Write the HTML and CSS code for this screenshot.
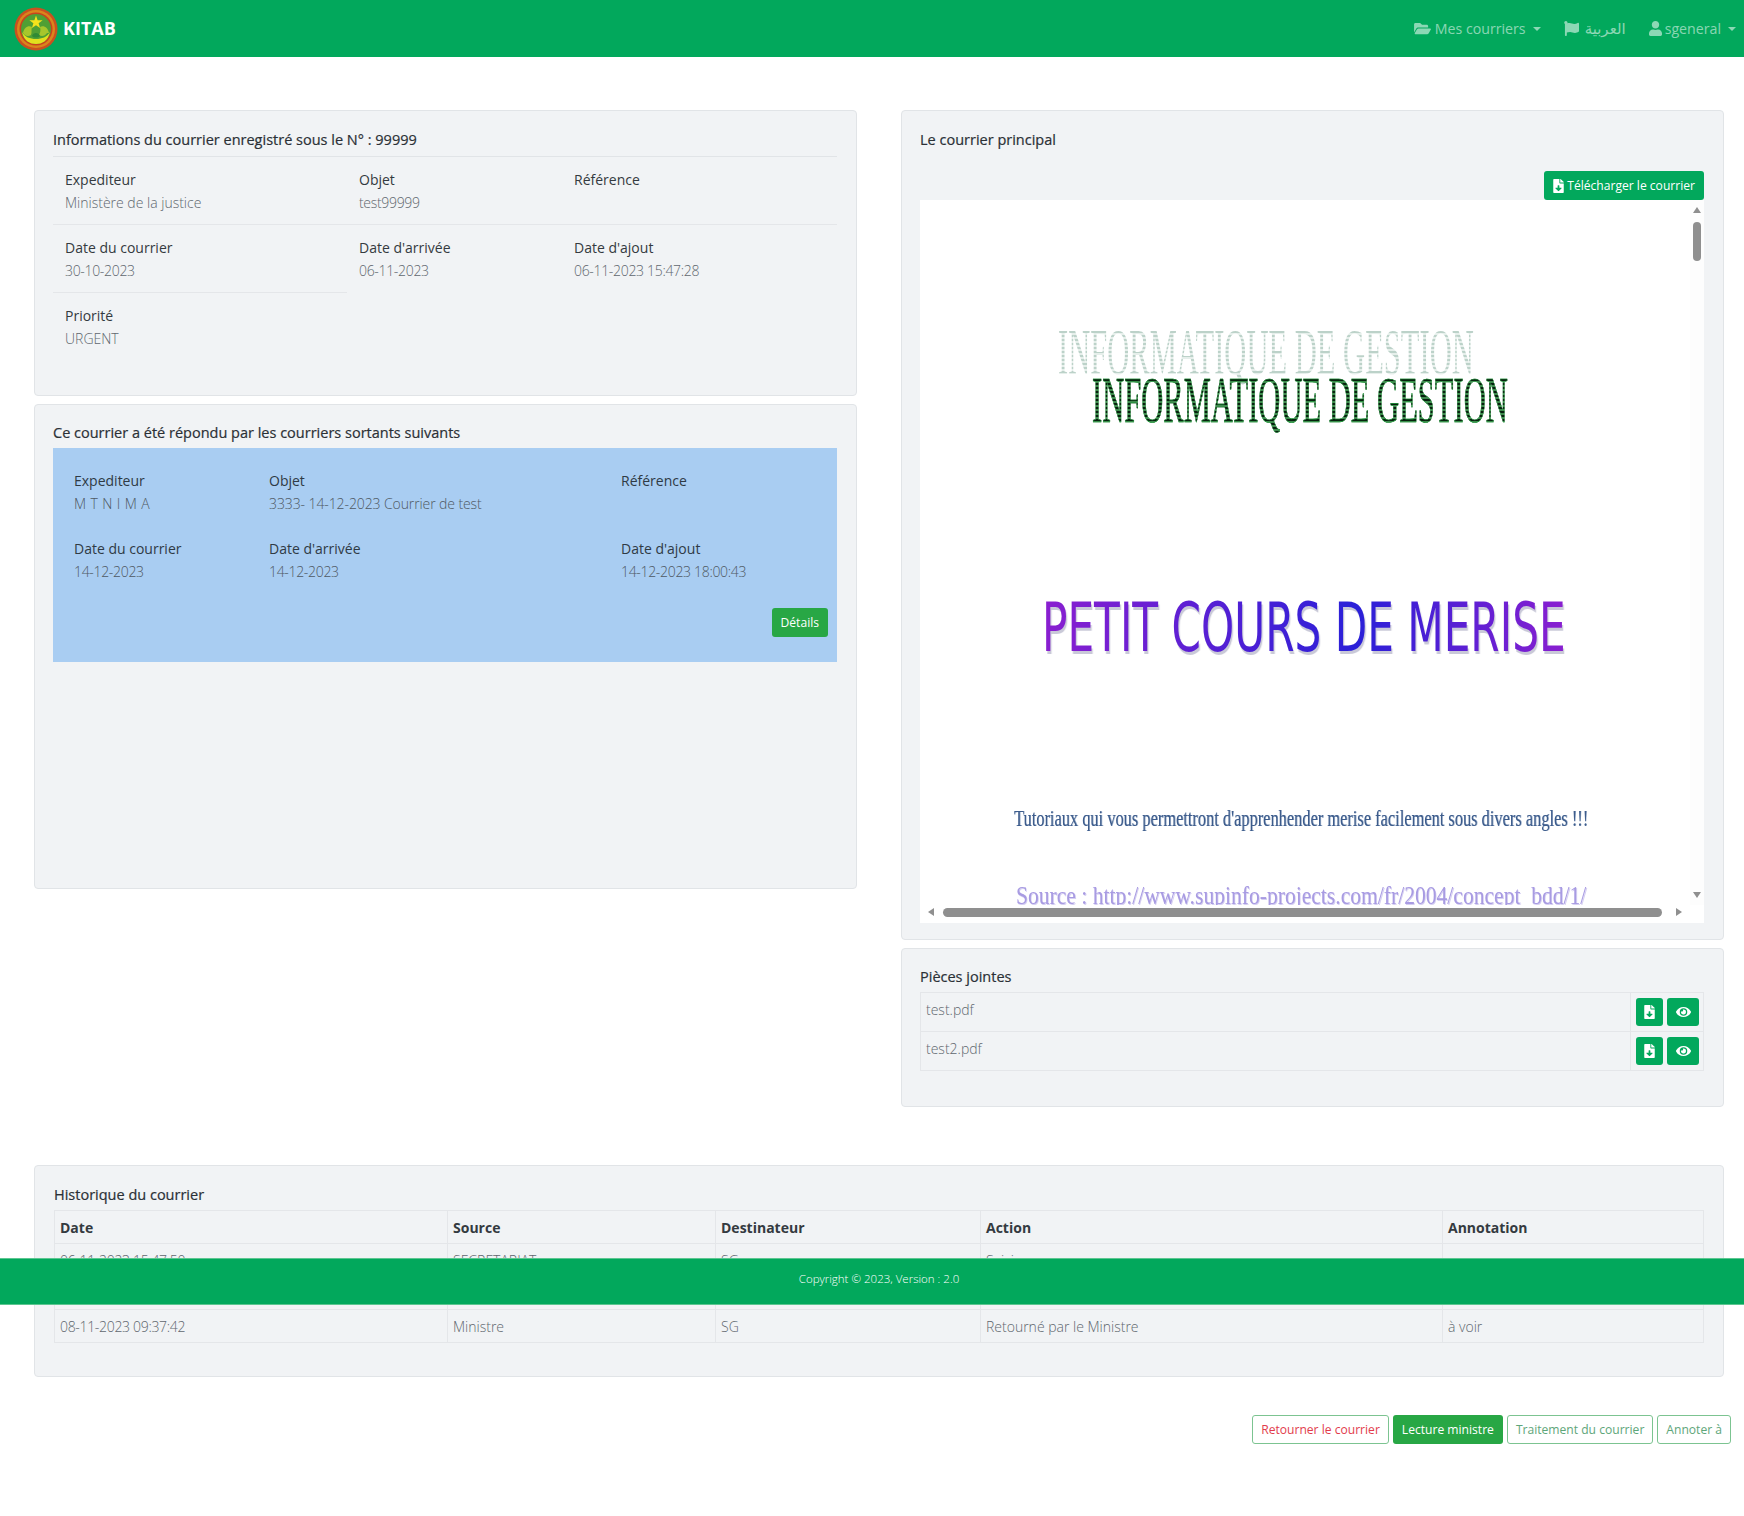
FILE: index.html
```html
<!DOCTYPE html>
<html lang="fr">
<head>
	<meta charset="UTF-8">
	<title>KITAB</title>
	<link rel="stylesheet" href="styles.css">
</head>
<body>
<svg class="defs" width="0" height="0">
	<symbol id="i-folder" viewBox="0 0 576 512"><path d="M572.694 292.093L500.27 416.248A63.997 63.997 0 0 1 444.989 448H45.025c-18.523 0-30.064-20.093-20.731-36.093l72.424-124.155A64 64 0 0 1 152 256h399.964c18.523 0 30.064 20.093 20.73 36.093zM152 224h328v-48c0-26.51-21.49-48-48-48H272l-64-64H48C21.49 64 0 85.49 0 112v278.046l69.077-118.418C86.214 242.25 117.989 224 152 224z"/></symbol>
	<symbol id="i-flag" viewBox="0 0 512 512"><path d="M349.565 98.783C295.978 98.783 251.721 64 184.348 64c-24.955 0-47.309 4.384-68.045 12.013a55.947 55.947 0 0 0 3.586-23.562C118.117 24.015 94.806 1.206 66.338.048 34.345-1.254 8 24.296 8 56c0 19.026 9.497 35.825 24 45.945V488c0 13.255 10.745 24 24 24h16c13.255 0 24-10.745 24-24v-94.4c28.311-12.064 63.582-22.122 114.435-22.122 53.588 0 97.844 34.783 165.217 34.783 48.169 0 86.667-16.294 122.505-40.858C506.84 359.452 512 349.571 512 339.045v-243.1c0-23.393-24.269-38.87-45.485-29.016-34.338 15.948-76.454 31.854-116.95 31.854z"/></symbol>
	<symbol id="i-user" viewBox="0 0 448 512"><path d="M224 256c70.7 0 128-57.3 128-128S294.7 0 224 0 96 57.3 96 128s57.3 128 128 128zm89.6 32h-16.7c-22.2 10.2-46.9 16-72.9 16s-50.6-5.8-72.9-16h-16.7C60.2 288 0 348.2 0 422.4V464c0 26.5 21.5 48 48 48h352c26.5 0 48-21.5 48-48v-41.6c0-74.2-60.2-134.4-134.4-134.4z"/></symbol>
	<symbol id="i-file" viewBox="0 0 384 512"><path d="M224 136V0H24C10.7 0 0 10.7 0 24v464c0 13.3 10.7 24 24 24h336c13.3 0 24-10.7 24-24V160H248c-13.2 0-24-10.8-24-24zm76.45 211.36l-96.42 95.7c-6.65 6.61-17.39 6.61-24.04 0l-96.42-95.7C73.42 337.29 80.54 320 94.82 320H160v-80c0-8.84 7.16-16 16-16h32c8.84 0 16 7.16 16 16v80h65.18c14.28 0 21.4 17.29 11.27 27.36zM377 105L279.1 7c-4.5-4.5-10.6-7-17-7H256v128h128v-6.1c0-6.3-2.5-12.4-7-16.9z"/></symbol>
	<symbol id="i-eye" viewBox="0 0 576 512"><path d="M572.52 241.4C518.29 135.59 410.93 64 288 64S57.68 135.64 3.48 241.41a32.35 32.35 0 0 0 0 29.19C57.71 376.41 165.07 448 288 448s230.32-71.64 284.52-177.41a32.35 32.35 0 0 0 0-29.19zM288 400a144 144 0 1 1 144-144 143.93 143.93 0 0 1-144 144zm0-240a95.31 95.31 0 0 0-25.31 3.79 47.85 47.85 0 0 1-66.9 66.9A95.78 95.78 0 1 0 288 160z"/></symbol>
</svg>

<nav class="navbar">
	<a class="brand" href="#">
		<svg class="logo" viewBox="0 0 44 44">
			<circle cx="22" cy="22" r="21.5" fill="#c9501f"/>
			<circle cx="22" cy="22" r="19" fill="#d9861c"/>
			<circle cx="22" cy="22" r="16.5" fill="#c8421f"/>
			<circle cx="22" cy="22" r="15" fill="#4f9f34"/>
			<path d="M8 25c2 9 8 12 14 12s12-3 14-12c-3 5-8 7-14 7S11 30 8 25z" fill="#e3df1e"/>
			<path d="M22 8.500l1.600 4.700 5 .1-4 3 1.500 4.800-4.100-2.900-4.100 2.900 1.500-4.800-4-3 5-.1z" fill="#f5e31c"/>
			<path d="M9 26c1-5 5-8 9-6-1 3 0 6-1 8-3 2-6 1-8-2zM35 26c-1-5-5-8-9-6 1 3 0 6-1 8 3 2 6 1 8-2z" fill="#a8c62c"/>
			<path d="M18 29c1-4 7-4 8 0-2 2-6 2-8 0z" fill="#2f8a35"/>
		</svg>
		KITAB
	</a>
	<div class="nav-links">
		<a class="nav-item" href="#"><svg class="nav-icon"><use href="#i-folder"/></svg>Mes courriers<span class="caret"></span></a>
		<a class="nav-item lang" href="#"><svg class="nav-icon flag"><use href="#i-flag"/></svg>العربية</a>
		<a class="nav-item account" href="#"><svg class="nav-icon user"><use href="#i-user"/></svg>sgeneral<span class="caret"></span></a>
	</div>
</nav>

<main class="page">
	<div class="columns">
		<div class="col">
			<section class="card card-info">
				<h5 class="card-title ruled">Informations du courrier enregistré sous le N° : 99999</h5>
				<div class="info-grid">
					<div class="cell line"><div>Expediteur</div><div class="val">Ministère de la justice</div></div>
					<div class="cell line"><div>Objet</div><div class="val num">test99999</div></div>
					<div class="cell line"><div>Référence</div></div>
					<div class="cell line"><div>Date du courrier</div><div class="val num">30-10-2023</div></div>
					<div class="cell"><div>Date d'arrivée</div><div class="val num">06-11-2023</div></div>
					<div class="cell"><div>Date d'ajout</div><div class="val num">06-11-2023 15:47:28</div></div>
					<div class="cell"><div>Priorité</div><div class="val">URGENT</div></div>
				</div>
			</section>
			<section class="card card-reply">
				<h5 class="card-title">Ce courrier a été répondu par les courriers sortants suivants</h5>
				<div class="reply-box">
					<div class="reply-grid">
						<div class="cell"><div>Expediteur</div><div class="val spaced">M T N I M A</div></div>
						<div class="cell"><div>Objet</div><div class="val tight">3333- 14-12-2023 Courrier de test</div></div>
						<div class="cell"><div>Référence</div></div>
						<div class="cell"><div>Date du courrier</div><div class="val num">14-12-2023</div></div>
						<div class="cell"><div>Date d'arrivée</div><div class="val num">14-12-2023</div></div>
						<div class="cell"><div>Date d'ajout</div><div class="val num">14-12-2023 18:00:43</div></div>
					</div>
					<div class="reply-actions"><a class="btn btn-success" href="#">Détails</a></div>
				</div>
			</section>
		</div>
		<div class="col">
			<section class="card card-main">
				<h5 class="card-title">Le courrier principal</h5>
				<div class="download-row">
					<a class="btn btn-green btn-dl" href="#"><svg class="btn-icon"><use href="#i-file"/></svg>Télécharger le courrier</a>
				</div>
				<div class="viewer">
					<div class="pdf-page">
						<div class="pdf-line wa-ghost">INFORMATIQUE DE GESTION</div>
						<div class="pdf-line wa-dark">INFORMATIQUE DE GESTION</div>
						<div class="pdf-line wa-title">PETIT COURS DE MERISE</div>
						<div class="pdf-line wa-tuto">Tutoriaux qui vous permettront d'apprenhender merise facilement sous divers angles  !!!</div>
						<div class="pdf-line wa-source">Source : http://www.supinfo-projects.com/fr/2004/concept_bdd/1/</div>
					</div>
					<div class="vbar">
						<span class="arrow up"></span>
						<span class="vthumb"></span>
						<span class="arrow down"></span>
					</div>
					<div class="hbar">
						<span class="arrow left"></span>
						<span class="hthumb"></span>
						<span class="arrow right"></span>
					</div>
				</div>
			</section>
			<section class="card card-files">
				<h5 class="card-title">Pièces jointes</h5>
				<table class="table files">
					<tr>
						<td class="val">test.pdf</td>
						<td class="file-cell">
							<div class="file-btns">
								<a class="btn btn-green btn-sq" href="#"><svg class="btn-icon"><use href="#i-file"/></svg></a>
								<a class="btn btn-green btn-eye" href="#"><svg class="btn-icon eye"><use href="#i-eye"/></svg></a>
							</div>
						</td>
					</tr>
					<tr>
						<td class="val">test2.pdf</td>
						<td class="file-cell">
							<div class="file-btns">
								<a class="btn btn-green btn-sq" href="#"><svg class="btn-icon"><use href="#i-file"/></svg></a>
								<a class="btn btn-green btn-eye" href="#"><svg class="btn-icon eye"><use href="#i-eye"/></svg></a>
							</div>
						</td>
					</tr>
				</table>
			</section>
		</div>
	</div>

	<section class="card card-history">
		<h5 class="card-title">Historique du courrier</h5>
		<table class="table history">
			<colgroup>
				<col class="c-date"><col class="c-src"><col class="c-dest"><col class="c-act"><col>
			</colgroup>
			<tr><th>Date</th><th>Source</th><th>Destinateur</th><th>Action</th><th>Annotation</th></tr>
			<tr><td class="num">06-11-2023 15:47:50</td><td>SECRETARIAT</td><td>SG</td><td>Saisie</td><td></td></tr>
			<tr><td></td><td></td><td></td><td></td><td></td></tr>
			<tr><td class="num">08-11-2023 09:37:42</td><td>Ministre</td><td>SG</td><td>Retourné par le Ministre</td><td>à voir</td></tr>
		</table>
	</section>

	<div class="actions">
		<a class="btn btn-outline danger" href="#">Retourner le courrier</a>
		<a class="btn btn-success" href="#">Lecture ministre</a>
		<a class="btn btn-outline" href="#">Traitement du courrier</a>
		<a class="btn btn-outline" href="#">Annoter à</a>
	</div>
</main>

<footer class="footer">Copyright © 2023, Version : 2.0</footer>
</body>
</html>
```
FILE: styles.css
```css
*{box-sizing:border-box;margin:0;padding:0;}
body{position:relative;height:1516px;overflow:hidden;background:#fff;color:#343a40;font-family:"Open Sans","DejaVu Sans",sans-serif;font-size:14px;line-height:23px;}
a{text-decoration:none;}
.defs{position:absolute;}

/* navbar */
.navbar{height:57px;background:#02a85c;display:flex;align-items:center;justify-content:space-between;padding:0 8px 0 14px;}
.brand{display:flex;align-items:center;gap:5px;color:#fff;font-size:18px;font-weight:700;}
.logo{width:44px;height:44px;}
.nav-links{display:flex;align-items:center;}
.nav-item{display:flex;align-items:center;color:rgba(255,255,255,.55);font-size:14.2px;font-weight:400;margin-left:22px;}
.nav-item.lang{font-size:15px;}
.nav-item.account{margin-left:23px;}
.nav-icon{width:17px;height:15px;fill:currentColor;margin-right:4px;}
.nav-icon.flag{margin-right:5px;}
.nav-icon.user{width:13px;margin-right:3px;}
.caret{width:0;height:0;border-top:4px solid currentColor;border-left:4px solid transparent;border-right:4px solid transparent;margin-left:7px;}

/* layout */
.page{padding:53px 19px 0 34px;}
.columns{display:grid;grid-template-columns:823px 823px;column-gap:44px;}
.col{display:flex;flex-direction:column;gap:8px;}
.card{background:#f1f3f5;border:1px solid #e1e4e7;border-radius:4px;padding:18px 19px 18px 18px;}
.card-title{font-size:14.5px;font-weight:500;line-height:21px;color:#2b3036;-webkit-text-stroke:.2px #2b3036;}
.card-title.ruled{border-bottom:1px solid #e1e4e7;padding-bottom:6px;}

.card-info{height:286px;}
.info-grid{display:grid;grid-template-columns:294px 215px 1fr;}
.cell{padding:11px 12px 8px;height:68px;}
.cell.line{border-bottom:1px solid #e4e6e9;}
.val{color:#60676e;font-weight:300;}
.val.spaced{letter-spacing:.4px;}
.val.tight{letter-spacing:-.1px;}
.num{letter-spacing:-.32px;}

.card-reply{height:485px;padding-top:17px;}
.reply-box{background:#a9cdf2;height:214px;margin-top:5px;padding:21px 9px 0 21px;color:#2f3a45;}
.reply-grid{display:grid;grid-template-columns:195px 352px 1fr;}
.reply-grid .cell{padding:0;height:68px;}
.reply-grid .val{color:#4f5963;}
.reply-actions{display:flex;justify-content:flex-end;margin-top:3px;}

/* buttons */
.btn{display:inline-flex;align-items:center;justify-content:center;height:29px;padding:0 8px;border-radius:3px;border:1px solid transparent;font-size:12.1px;white-space:nowrap;}
.btn-green{background:#02a85c;color:#fff;}
.btn-success{background:#28a745;color:#fff;}
.btn-outline{background:#fff;border-color:#7cc491;color:#5ea67a;}
.btn-outline.danger{color:#e23c4c;}
.btn-icon{width:11px;height:14px;fill:#fff;margin-right:3px;}
.btn-sq .btn-icon,.btn-eye .btn-icon{margin:0;}
.btn-icon.eye{width:15px;}

.card-main{height:830px;}
.download-row{display:flex;justify-content:flex-end;margin-top:21px;}
.viewer{display:grid;grid-template-columns:770px 14px;grid-template-rows:705px 18px;background:#fff;}
.pdf-page{overflow:hidden;background:#fff;padding-top:1px;}
.pdf-line{white-space:nowrap;transform-origin:left top;width:max-content;font-family:"Liberation Serif",serif;}
.wa-ghost{font-size:65px;line-height:66px;margin:118px 0 0 138px;background:repeating-linear-gradient(0deg,#bcd2c9 0 2px,#e6efeb 2px 4px);-webkit-background-clip:text;background-clip:text;color:transparent;transform:scaleX(.47);}
.wa-dark{font-size:65px;line-height:66px;margin:-18px 0 0 172px;background:repeating-linear-gradient(0deg,#07210e 0 2px,#3f8a4e 2px 4px);-webkit-background-clip:text;background-clip:text;color:transparent;-webkit-text-stroke:.6px #1e9a3a;transform:scaleX(.47);}
.wa-title{font-family:"DejaVu Sans",sans-serif;font-size:67px;line-height:66px;margin:162px 0 0 122px;background:linear-gradient(90deg,#8a1fd0,#2a20d8 60%,#8a1fd0);-webkit-background-clip:text;background-clip:text;color:transparent;filter:drop-shadow(2px 3px 0 #c9c9d8);transform:scaleX(.63);}
.wa-tuto{font-size:24px;line-height:28px;margin:143px 0 0 94px;color:#3d5c8c;text-shadow:1px 0 #9fb2cc;transform:scaleX(.683);}
.wa-source{font-size:26px;line-height:30px;margin:49px 0 0 96px;color:#a89be2;text-shadow:1px 1px #d5cff2;transform:scaleX(.83);}

.vbar{display:flex;flex-direction:column;align-items:center;background:#fdfdfd;padding:7px 0;}
.vthumb{width:8px;height:39px;background:#8f8f8f;border-radius:4px;margin-top:9px;}
.vbar .down{margin-top:auto;}
.hbar{grid-column:1;display:flex;align-items:center;padding:0 8px 4px 8px;background:#fff;}
.hthumb{width:724px;height:9px;background:#8f8f8f;border-radius:5px;margin:0 14px 0 9px;}
.arrow{width:0;height:0;display:block;border:4px solid transparent;}
.arrow.up{border-top:0;border-bottom:6px solid #8f8f8f;}
.arrow.down{border-bottom:0;border-top:6px solid #8f8f8f;}
.arrow.left{border-left:0;border-right:6px solid #8f8f8f;}
.arrow.right{border-right:0;border-left:6px solid #8f8f8f;}

.card-files{height:159px;padding-top:17px;}
.table{border-collapse:collapse;width:100%;table-layout:fixed;}
.table td,.table th{border:1px solid #e4e6e9;padding:4px 5px;vertical-align:top;text-align:left;}
.files{margin-top:5px;}
.files tr{height:39px;}
.files .val{padding-top:5px;}
.files .file-cell{width:73px;padding:5px 3px 5px 5px;}
.file-btns{display:flex;gap:4px;}
.btn-sq{width:27px;padding:0;height:28px;}
.btn-eye{width:32px;padding:0;height:28px;}

.card-history{height:212px;margin-top:58px;width:1690px;padding-left:19px;}
.history{margin-top:5px;width:1650px;}
.history th{height:33px;padding-top:5px;font-weight:700;color:#343a40;}
.history td{height:33px;padding-top:5px;color:#60676e;font-weight:300;}
.c-date{width:393px;}
.c-src{width:268px;}
.c-dest{width:265px;}
.c-act{width:462px;}

.actions{display:flex;justify-content:flex-end;gap:4px;margin:38px -6px 0 0;}

.footer{position:absolute;left:0;right:0;top:1258px;height:47px;background:#02a85c;border-top:1px solid #5cc690;border-bottom:1px solid #5cc690;color:#fff;font-size:11.5px;font-weight:300;text-align:center;padding:8px 0 0 14px;}
```
